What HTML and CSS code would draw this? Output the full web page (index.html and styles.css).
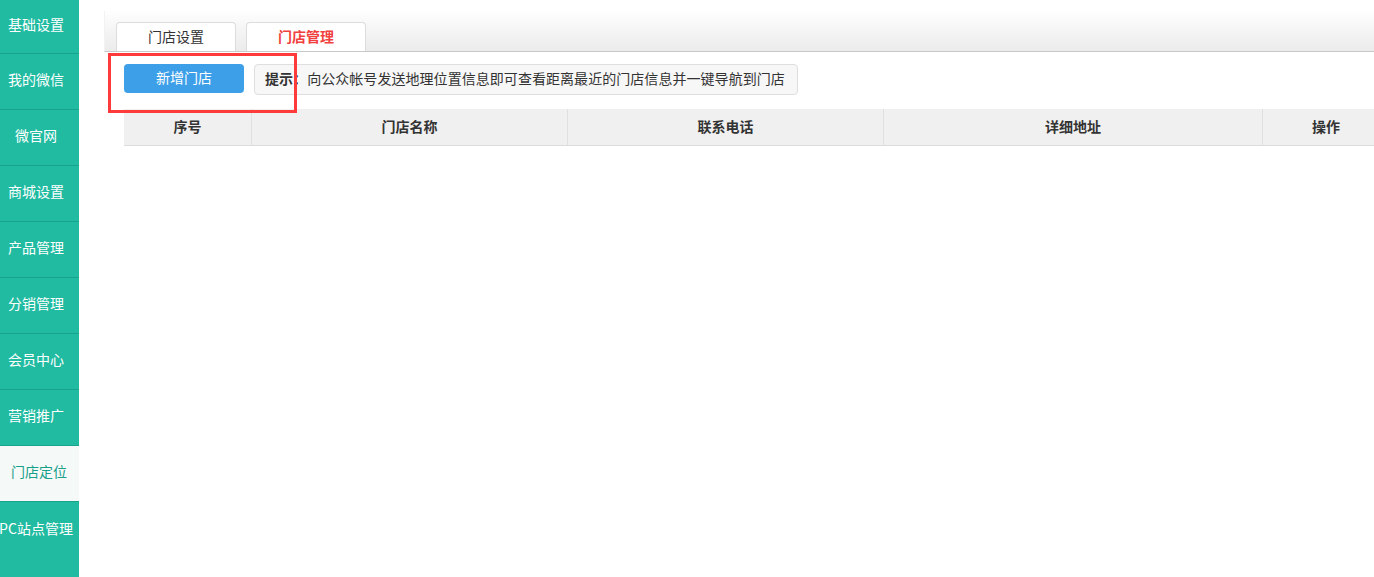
FILE: index.html
```html
<!DOCTYPE html>
<html lang="zh-CN">
<head>
<meta charset="utf-8">
<title>门店管理</title>
<link rel="stylesheet" href="styles.css">
</head>
<body>
<div class="layout">
  <nav class="sidebar">
    <a class="nav-item">基础设置</a>
    <a class="nav-item">我的微信</a>
    <a class="nav-item">微官网</a>
    <a class="nav-item">商城设置</a>
    <a class="nav-item">产品管理</a>
    <a class="nav-item">分销管理</a>
    <a class="nav-item">会员中心</a>
    <a class="nav-item">营销推广</a>
    <a class="nav-item active">门店定位</a>
    <a class="nav-item">PC站点管理</a>
  </nav>
  <main class="main">
    <div class="tabbar">
      <div class="tab">门店设置</div>
      <div class="tab current">门店管理</div>
    </div>
    <div class="toolbar">
      <button class="btn-add">新增门店</button>
      <div class="hint"><b>提示：</b>向公众帐号发送地理位置信息即可查看距离最近的门店信息并一键导航到门店</div>
      <div class="highlight"></div>
    </div>
    <table class="grid">
      <thead>
        <tr>
          <th class="c1">序号</th>
          <th class="c2">门店名称</th>
          <th class="c3">联系电话</th>
          <th class="c4">详细地址</th>
          <th class="c5">操作</th>
        </tr>
      </thead>
      <tbody></tbody>
    </table>
  </main>
</div>
</body>
</html>
```

FILE: styles.css
```css
html, body {
  margin: 0;
  padding: 0;
  background: #fff;
  font-family: "Microsoft YaHei", "Noto Sans CJK SC", "Liberation Sans", sans-serif;
  font-size: 14px;
  line-height: 1.2;
  color: #333;
  overflow: hidden;
}

.layout {
  display: flex;
  height: 577px;
}

.sidebar {
  width: 79px;
  flex: none;
  background: #20bba1;
  display: flex;
  flex-direction: column;
}

.nav-item {
  box-sizing: border-box;
  height: 56px;
  border-bottom: 1px solid #1aa38c;
  display: flex;
  align-items: center;
  justify-content: center;
  padding: 0 7px 4px 0;
  color: #fff;
  white-space: nowrap;
  font-size: 14px;
  cursor: pointer;
}

.nav-item:first-child {
  height: 54px;
}

.nav-item:last-child {
  border-bottom: none;
}

.nav-item.active {
  background: #f5f9f8;
  color: #18a08a;
  padding-left: 3px;
  padding-right: 4px;
}

.main {
  flex: 1;
  padding: 11px 0 0 25px;
  overflow: hidden;
}

.tabbar {
  height: 40px;
  border-bottom: 1px solid #c9c9c9;
  border-left: 1px solid #f2f2f2;
  background: linear-gradient(#fefefe, #ebebeb);
  display: flex;
  align-items: flex-end;
  gap: 10px;
  padding-left: 11px;
}

.tab {
  box-sizing: border-box;
  width: 120px;
  height: 29px;
  padding-bottom: 2px;
  background: #fff;
  border: 1px solid #dcdcdc;
  border-bottom: none;
  border-radius: 4px 4px 0 0;
  display: flex;
  align-items: center;
  justify-content: center;
  color: #333;
}

.tab.current {
  color: #f0413f;
  font-weight: bold;
}

.toolbar {
  position: relative;
  display: flex;
  align-items: flex-start;
  gap: 10px;
  padding: 12px 0 0 20px;
}

.btn-add {
  width: 120px;
  height: 29px;
  border: none;
  border-radius: 4px;
  background: #3d9fe8;
  color: #fff;
  font: inherit;
  font-size: 14px;
  padding: 0 0 3px 0;
}

.hint {
  box-sizing: border-box;
  height: 31px;
  border: 1px solid #dedede;
  border-radius: 4px;
  background: #f7f7f7;
  padding: 0 12px 2px 10px;
  display: flex;
  align-items: center;
  color: #333;
  white-space: nowrap;
  letter-spacing: 0.05px;
}

.hint b {
  font-weight: bold;
}

.highlight {
  position: absolute;
  left: 4px;
  top: 1px;
  width: 183px;
  height: 54px;
  border: 3px solid #ff3a3a;
  pointer-events: none;
}

.grid {
  margin: 14px 0 0 20px;
  border-collapse: collapse;
  table-layout: fixed;
  width: 1261px;
}

.grid th {
  height: 34px;
  background: #f0f0f0;
  border-bottom: 1px solid #dcdcdc;
  border-left: 1px solid #e0e0e0;
  font-weight: bold;
  color: #333;
  padding: 0 0 2px 0;
  text-align: center;
}

.grid th:first-child {
  border-left: none;
}

.c1 { width: 127px; }
.c2 { width: 315px; }
.c3 { width: 315px; }
.c4 { width: 378px; }
.c5 { width: 126px; }
```
